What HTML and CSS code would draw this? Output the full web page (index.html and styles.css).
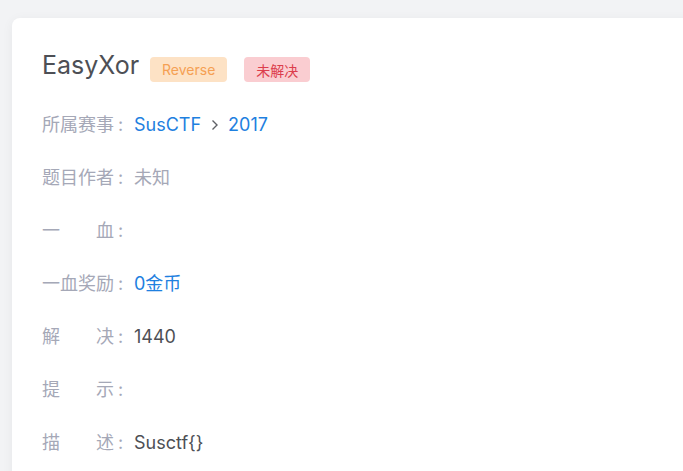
FILE: index.html
```html
<!DOCTYPE html>
<html lang="zh">
<head>
<meta charset="utf-8">
<link rel="stylesheet" href="styles.css">
</head>
<body>
<div class="card">
  <div class="head">
    <h1 class="title">EasyXor</h1>
    <span class="tag tag-orange">Reverse</span>
    <span class="tag tag-red">未解决</span>
  </div>
  <div class="rows">
    <div class="row">
      <span class="label"><span class="lt">所属赛事</span>:</span>
      <span class="value link crumb">SusCTF<svg class="chev" viewBox="0 0 8 12" width="8" height="12"><path d="M1.5 1.5 L6 6 L1.5 10.5" fill="none" stroke="#5f6166" stroke-width="1.4"/></svg>2017</span>
    </div>
    <div class="row">
      <span class="label"><span class="lt">题目作者</span>:</span>
      <span class="value muted">未知</span>
    </div>
    <div class="row">
      <span class="label"><span class="lt sp"><span>一</span><span>血</span></span>:</span>
      <span class="value"></span>
    </div>
    <div class="row">
      <span class="label"><span class="lt">一血奖励</span>:</span>
      <span class="value link">0金币</span>
    </div>
    <div class="row">
      <span class="label"><span class="lt sp"><span>解</span><span>决</span></span>:</span>
      <span class="value">1440</span>
    </div>
    <div class="row">
      <span class="label"><span class="lt sp"><span>提</span><span>示</span></span>:</span>
      <span class="value"></span>
    </div>
    <div class="row">
      <span class="label"><span class="lt sp"><span>描</span><span>述</span></span>:</span>
      <span class="value">Susctf{}</span>
    </div>
  </div>
</div>
</body>
</html>
```

FILE: styles.css
```css
html, body {
  margin: 0;
  padding: 0;
}
body {
  background: #f2f3f5;
  font-family: Inter, "Noto Sans CJK SC", sans-serif;
  overflow: hidden;
  height: 471px;
}
.card {
  margin: 18px -30px 0 12px;
  background: #ffffff;
  border-radius: 8px;
  box-shadow: 0 2px 12px rgba(0, 0, 0, 0.05);
  padding: 29px 0 40px 30px;
  min-height: 500px;
}
.head {
  display: flex;
  align-items: flex-start;
  height: 36px;
}
.title {
  margin: 0;
  font-size: 25px;
  font-weight: 400;
  color: #4d4f55;
  line-height: 36px;
}
.tag {
  display: inline-flex;
  align-items: center;
  justify-content: center;
  height: 25px;
  border-radius: 4px;
  font-size: 14px;
  padding: 0 12px;
  margin-top: 10px;
}
.tag-orange {
  background: #fde2c5;
  color: #f5a053;
  margin-left: 11px;
}
.tag-red {
  background: #facdd1;
  color: #dc3d4c;
  margin-left: 17px;
}
.rows {
  display: flex;
  flex-direction: column;
  gap: 25px;
  margin-top: 28px;
}
.row {
  display: flex;
  align-items: center;
  height: 28px;
  font-size: 18px;
  line-height: 28px;
}
.label {
  display: flex;
  width: 92px;
  color: #a5a8b7;
  flex: none;
}
.lt {
  width: 72px;
  display: flex;
  justify-content: space-between;
  margin-right: 4px;
}
.value {
  color: #4d4f55;
}
.value.muted {
  color: #a5a8b7;
}
.link {
  color: #1e80e0;
}
.crumb {
  display: flex;
  align-items: center;
}
.chev {
  margin: 0 9px 0 10px;
}
```
